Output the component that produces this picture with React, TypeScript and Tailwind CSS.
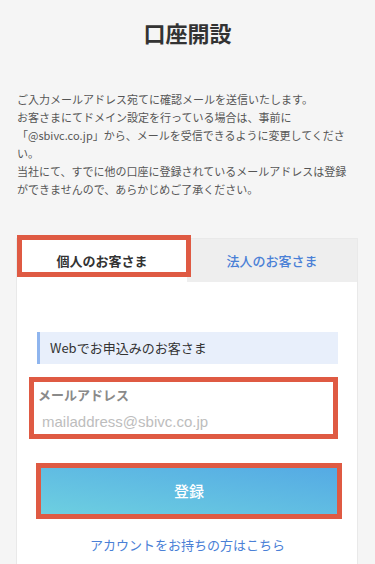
export default function App() {
  const red = 'border-[#df5a43]';

  return (
    <div className="min-h-[564px] bg-[#f5f5f5] font-['Noto_Sans_CJK_JP',sans-serif]">
      {/* タイトル */}
      <h1 className="pt-[17px] text-center text-[22px] leading-[30px] font-bold text-[#333]">口座開設</h1>

      {/* 説明文 */}
      <div className="mt-[43px] pl-[17px] pr-[14px] text-[11px] leading-[18px] text-[#555]">
        <p>ご入力メールアドレス宛てに確認メールを送信いたします。</p>
        <p>お客さまにてドメイン設定を行っている場合は、事前に</p>
        <p>「@sbivc.co.jp」から、メールを受信できるように変更してください。</p>
        <p>
          当社にて、すでに他の口座に登録されているメールアドレスは登録
          <br />
          ができませんので、あらかじめご了承ください。
        </p>
      </div>

      {/* カード */}
      <div className="mt-[40px] ml-[16px] w-[342px] border border-[#e9e9e9] bg-white">
        <div className="flex h-[43px] bg-[#eeeeee]">
          <div className="relative flex w-[170px] items-center justify-center bg-white text-[13px] font-bold text-[#333]">
            個人のお客さま
            <div className={`absolute -top-[4px] left-0 h-[42px] w-[174px] border-[5px] ${red}`} />
          </div>
          <div className="flex flex-1 items-center justify-center text-[13px] font-medium text-[#4a80d6]">
            法人のお客さま
          </div>
        </div>

        <div className="pl-[20px] pr-[19px] pt-[50px] pb-[10px]">
          <div className="flex h-[32px] items-center border-l-[3px] border-[#8fb5ee] bg-[#e8effb] pl-[10px] text-[13px] text-[#333]">
            Webでお申込みのお客さま
          </div>

          <div className={`mt-[13px] -ml-[8px] h-[62px] border-[5px] ${red} px-[4px] pt-[4px]`}>
            <div className="text-[13px] leading-[18px] font-bold text-[#8a8a8a]">メールアドレス</div>
            <input
              type="email"
              placeholder="mailaddress@sbivc.co.jp"
              className="mt-[8px] block h-[20px] w-full bg-transparent pl-[4px] font-['Liberation_Sans',sans-serif] text-[15px] text-[#333] outline-none placeholder:text-[#bdbdbd]"
            />
          </div>

          <button
            className={`mt-[24px] -ml-[1px] flex h-[56px] w-[306px] items-center justify-center border-[5px] ${red} bg-linear-to-tr from-[#6dcfe0] to-[#55aae4] text-[15px] font-medium text-white`}
          >
            登録
          </button>

          <div className="mt-[17px] text-center text-[13px] leading-[18px] text-[#4a80d6]">
            アカウントをお持ちの方はこちら
          </div>
        </div>
      </div>
    </div>
  );
}
